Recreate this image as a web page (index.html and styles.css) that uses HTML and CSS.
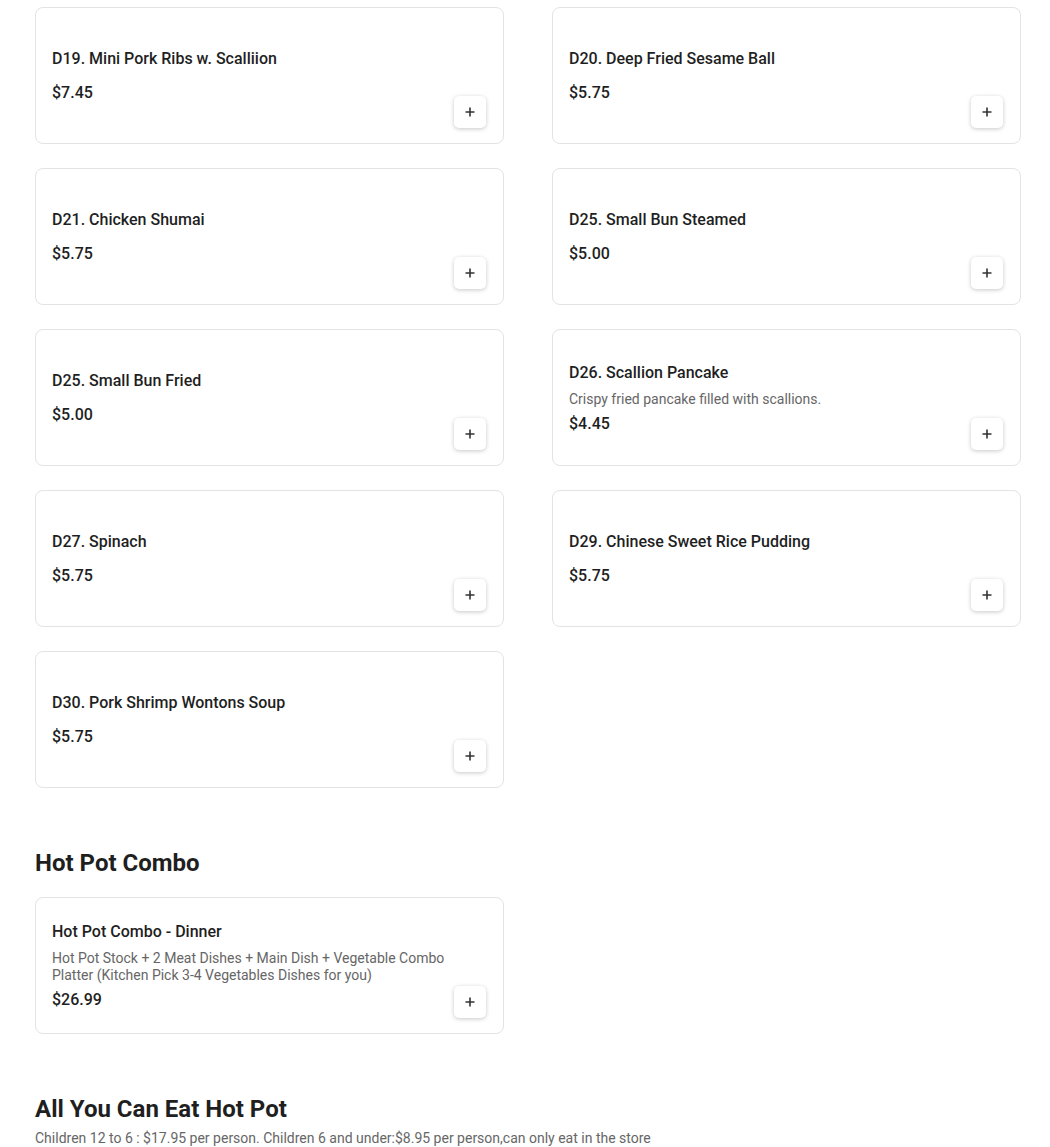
FILE: index.html
```html
<!DOCTYPE html>
<html>
<head>
<meta charset="utf-8">
<link rel="stylesheet" href="styles.css">
</head>
<body>
<div class="page">
  <div class="grid">
    <div class="card"><div class="info"><div class="title">D19. Mini Pork Ribs w. Scalliion</div><div class="price nd">$7.45</div></div><button class="add"><svg width="12" height="12" viewBox="0 0 12 12"><path d="M6 1.5v9M1.5 6h9" stroke="#333" stroke-width="1.6"/></svg></button></div>
    <div class="card"><div class="info"><div class="title">D20. Deep Fried Sesame Ball</div><div class="price nd">$5.75</div></div><button class="add"><svg width="12" height="12" viewBox="0 0 12 12"><path d="M6 1.5v9M1.5 6h9" stroke="#333" stroke-width="1.6"/></svg></button></div>
    <div class="card"><div class="info"><div class="title">D21. Chicken Shumai</div><div class="price nd">$5.75</div></div><button class="add"><svg width="12" height="12" viewBox="0 0 12 12"><path d="M6 1.5v9M1.5 6h9" stroke="#333" stroke-width="1.6"/></svg></button></div>
    <div class="card"><div class="info"><div class="title">D25. Small Bun Steamed</div><div class="price nd">$5.00</div></div><button class="add"><svg width="12" height="12" viewBox="0 0 12 12"><path d="M6 1.5v9M1.5 6h9" stroke="#333" stroke-width="1.6"/></svg></button></div>
    <div class="card"><div class="info"><div class="title">D25. Small Bun Fried</div><div class="price nd">$5.00</div></div><button class="add"><svg width="12" height="12" viewBox="0 0 12 12"><path d="M6 1.5v9M1.5 6h9" stroke="#333" stroke-width="1.6"/></svg></button></div>
    <div class="card"><div class="info"><div class="title">D26. Scallion Pancake</div><div class="desc">Crispy fried pancake filled with scallions.</div><div class="price">$4.45</div></div><button class="add"><svg width="12" height="12" viewBox="0 0 12 12"><path d="M6 1.5v9M1.5 6h9" stroke="#333" stroke-width="1.6"/></svg></button></div>
    <div class="card"><div class="info"><div class="title">D27. Spinach</div><div class="price nd">$5.75</div></div><button class="add"><svg width="12" height="12" viewBox="0 0 12 12"><path d="M6 1.5v9M1.5 6h9" stroke="#333" stroke-width="1.6"/></svg></button></div>
    <div class="card"><div class="info"><div class="title">D29. Chinese Sweet Rice Pudding</div><div class="price nd">$5.75</div></div><button class="add"><svg width="12" height="12" viewBox="0 0 12 12"><path d="M6 1.5v9M1.5 6h9" stroke="#333" stroke-width="1.6"/></svg></button></div>
    <div class="card"><div class="info"><div class="title">D30. Pork Shrimp Wontons Soup</div><div class="price nd">$5.75</div></div><button class="add"><svg width="12" height="12" viewBox="0 0 12 12"><path d="M6 1.5v9M1.5 6h9" stroke="#333" stroke-width="1.6"/></svg></button></div>
  </div>

  <h2 class="section-title combo">Hot Pot Combo</h2>
  <div class="grid">
    <div class="card"><div class="info"><div class="title">Hot Pot Combo - Dinner</div><div class="desc">Hot Pot Stock + 2 Meat Dishes + Main Dish + Vegetable Combo Platter (Kitchen Pick 3-4 Vegetables Dishes for you)</div><div class="price">$26.99</div></div><button class="add"><svg width="12" height="12" viewBox="0 0 12 12"><path d="M6 1.5v9M1.5 6h9" stroke="#333" stroke-width="1.6"/></svg></button></div>
  </div>

  <h2 class="section-title ayce">All You Can Eat Hot Pot</h2>
  <p class="section-sub">Children 12 to 6 : $17.95 per person. Children 6 and under:$8.95 per person,can only eat in the store</p>
</div>
</body>
</html>
```

FILE: styles.css
```css
* { box-sizing: border-box; }
body {
  margin: 0;
  background: #fff;
  font-family: Roboto, "Liberation Sans", Arial, sans-serif;
  color: #1f1f1f;
}
.page {
  width: 986px;
  margin-left: 35px;
  padding-top: 7px;
}
.grid {
  display: grid;
  grid-template-columns: 1fr 1fr;
  column-gap: 48px;
  row-gap: 24px;
}
.card {
  height: 137px;
  border: 1px solid #e3e3e3;
  border-radius: 8px;
  padding: 16px 17px 15px 16px;
  display: flex;
  align-items: stretch;
  background: #fff;
}
.info {
  flex: 1;
  display: flex;
  flex-direction: column;
  justify-content: center;
  padding-right: 4px;
}
.title {
  font-size: 16px;
  font-weight: 500;
  line-height: 24px;
  color: #1f1f1f;
}
.desc {
  margin-top: 6px;
  font-size: 14px;
  line-height: 17px;
  color: #666;
}
.price {
  margin-top: 4px;
  font-size: 16px;
  font-weight: 500;
  line-height: 24px;
  color: #1f1f1f;
}
.price.nd { margin-top: 10px; }
.add {
  align-self: flex-end;
  width: 32px;
  height: 32px;
  flex: none;
  padding: 0;
  border: none;
  border-radius: 5px;
  background: #fff;
  box-shadow: 0 1px 4px rgba(0,0,0,0.22);
  display: flex;
  align-items: center;
  justify-content: center;
}
.section-title {
  margin: 0;
  font-size: 24px;
  font-weight: 700;
  line-height: 32px;
  color: #1f1f1f;
}
.section-title.combo { margin-top: 59px; margin-bottom: 18px; }
.section-title.ayce { margin-top: 59px; }
.section-sub {
  margin: 3px 0 0;
  font-size: 14px;
  line-height: 20px;
  color: #666;
}
```
